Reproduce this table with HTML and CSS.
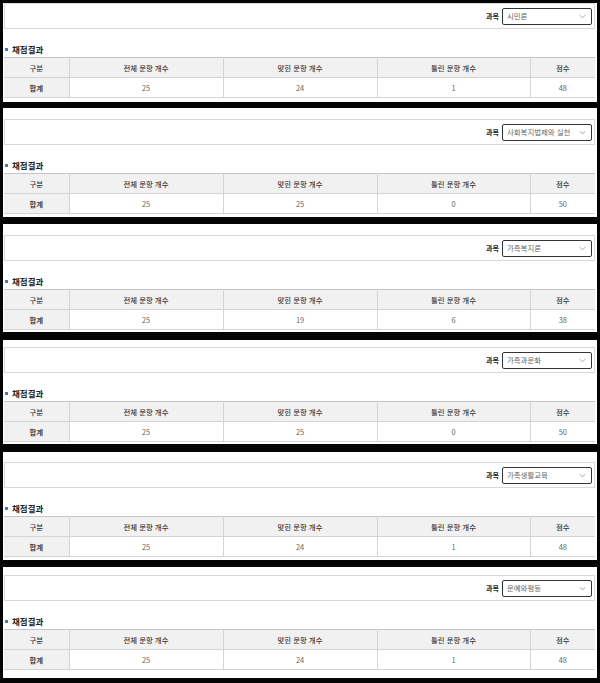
FILE: index.html
```html
<!DOCTYPE html>
<html lang="ko">
<head>
<meta charset="utf-8">
<title>채점결과</title>
<link rel="stylesheet" href="styles.css">
</head>
<body>
<div class="stack">

  <section class="panel p1">
    <div class="filter">
      <span class="label">과목</span>
      <div class="select"><span class="val">시민론</span><svg class="chev" viewBox="0 0 8 5" width="7" height="5"><path d="M1 1l3 3 3-3" fill="none" stroke="#888" stroke-width="0.9"/></svg></div>
    </div>
    <h3 class="title">채점결과</h3>
    <table class="result">
      <colgroup><col class="c1"><col class="c2"><col class="c3"><col class="c4"><col class="c5"></colgroup>
      <tr><th>구분</th><th>전체 문항 개수</th><th>맞힌 문항 개수</th><th>틀린 문항 개수</th><th>점수</th></tr>
      <tr><th class="rowh">합계</th><td>25</td><td>24</td><td>1</td><td>48</td></tr>
    </table>
  </section>

  <section class="panel p2">
    <div class="filter">
      <span class="label">과목</span>
      <div class="select"><span class="val">사회복지법제와 실천</span><svg class="chev" viewBox="0 0 8 5" width="7" height="5"><path d="M1 1l3 3 3-3" fill="none" stroke="#888" stroke-width="0.9"/></svg></div>
    </div>
    <h3 class="title">채점결과</h3>
    <table class="result">
      <colgroup><col class="c1"><col class="c2"><col class="c3"><col class="c4"><col class="c5"></colgroup>
      <tr><th>구분</th><th>전체 문항 개수</th><th>맞힌 문항 개수</th><th>틀린 문항 개수</th><th>점수</th></tr>
      <tr><th class="rowh">합계</th><td>25</td><td>25</td><td>0</td><td>50</td></tr>
    </table>
  </section>

  <section class="panel p3">
    <div class="filter">
      <span class="label">과목</span>
      <div class="select"><span class="val">가족복지론</span><svg class="chev" viewBox="0 0 8 5" width="7" height="5"><path d="M1 1l3 3 3-3" fill="none" stroke="#888" stroke-width="0.9"/></svg></div>
    </div>
    <h3 class="title">채점결과</h3>
    <table class="result">
      <colgroup><col class="c1"><col class="c2"><col class="c3"><col class="c4"><col class="c5"></colgroup>
      <tr><th>구분</th><th>전체 문항 개수</th><th>맞힌 문항 개수</th><th>틀린 문항 개수</th><th>점수</th></tr>
      <tr><th class="rowh">합계</th><td>25</td><td>19</td><td>6</td><td>38</td></tr>
    </table>
  </section>

  <section class="panel p4">
    <div class="filter">
      <span class="label">과목</span>
      <div class="select"><span class="val">가족과문화</span><svg class="chev" viewBox="0 0 8 5" width="7" height="5"><path d="M1 1l3 3 3-3" fill="none" stroke="#888" stroke-width="0.9"/></svg></div>
    </div>
    <h3 class="title">채점결과</h3>
    <table class="result">
      <colgroup><col class="c1"><col class="c2"><col class="c3"><col class="c4"><col class="c5"></colgroup>
      <tr><th>구분</th><th>전체 문항 개수</th><th>맞힌 문항 개수</th><th>틀린 문항 개수</th><th>점수</th></tr>
      <tr><th class="rowh">합계</th><td>25</td><td>25</td><td>0</td><td>50</td></tr>
    </table>
  </section>

  <section class="panel p5">
    <div class="filter">
      <span class="label">과목</span>
      <div class="select"><span class="val">가족생활교육</span><svg class="chev" viewBox="0 0 8 5" width="7" height="5"><path d="M1 1l3 3 3-3" fill="none" stroke="#888" stroke-width="0.9"/></svg></div>
    </div>
    <h3 class="title">채점결과</h3>
    <table class="result">
      <colgroup><col class="c1"><col class="c2"><col class="c3"><col class="c4"><col class="c5"></colgroup>
      <tr><th>구분</th><th>전체 문항 개수</th><th>맞힌 문항 개수</th><th>틀린 문항 개수</th><th>점수</th></tr>
      <tr><th class="rowh">합계</th><td>25</td><td>24</td><td>1</td><td>48</td></tr>
    </table>
  </section>

  <section class="panel p6">
    <div class="filter">
      <span class="label">과목</span>
      <div class="select"><span class="val">문예와평등</span><svg class="chev" viewBox="0 0 8 5" width="7" height="5"><path d="M1 1l3 3 3-3" fill="none" stroke="#888" stroke-width="0.9"/></svg></div>
    </div>
    <h3 class="title">채점결과</h3>
    <table class="result">
      <colgroup><col class="c1"><col class="c2"><col class="c3"><col class="c4"><col class="c5"></colgroup>
      <tr><th>구분</th><th>전체 문항 개수</th><th>맞힌 문항 개수</th><th>틀린 문항 개수</th><th>점수</th></tr>
      <tr><th class="rowh">합계</th><td>25</td><td>24</td><td>1</td><td>48</td></tr>
    </table>
  </section>

</div>
</body>
</html>
```

FILE: styles.css
```css
html, body {
  margin: 0;
  padding: 0;
  background: #050505;
}
body {
  width: 600px;
  height: 683px;
  overflow: hidden;
  font-family: "Noto Sans CJK KR", "Noto Sans", sans-serif;
  color: #555;
}
.stack {
  display: flex;
  flex-direction: column;
  padding-top: 3px;
}
.panel {
  background: #fff;
  margin: 0 3px;
  padding-left: 1px;
  padding-right: 2px;
}
.p1 { padding-top: 0;    padding-bottom: 4px; }
.p2 { margin-top: 6px;  padding-top: 11px; padding-bottom: 3px; }
.p3 { margin-top: 7px;  padding-top: 11px; padding-bottom: 2px; }
.p4 { margin-top: 8px;  padding-top: 7px;  padding-bottom: 2px; }
.p5 { margin-top: 8px;  padding-top: 10px; padding-bottom: 3px; }
.p6 { margin-top: 7px;  padding-top: 8px;  padding-bottom: 8px; }

.filter {
  height: 24px;
  border: 1px solid #d8d8d8;
  display: flex;
  align-items: center;
  justify-content: flex-end;
  padding-right: 2px;
}
.label {
  font-size: 7px;
  font-weight: 700;
  color: #222;
  margin-right: 3px;
  line-height: 10px;
}
.select {
  height: 15px;
  border: 1px solid #333;
  border-radius: 2px;
  display: flex;
  align-items: center;
  justify-content: space-between;
  padding: 0 5px 0 4px;
  box-sizing: content-box;
  width: 79px;
}
.val {
  font-size: 7.4px;
  color: #666;
  line-height: 10px;
  white-space: nowrap;
}
.chev {
  display: block;
  flex: none;
}
.title {
  margin: 14px 0 2px;
  padding-left: 1px;
  font-size: 8.5px;
  line-height: 12px;
  font-weight: 700;
  color: #222;
  display: flex;
  align-items: center;
}
.title::before {
  content: "";
  width: 3px;
  height: 3px;
  background: #3c7fc0;
  margin-right: 4px;
}
.result {
  width: 591px;
  border-collapse: collapse;
  table-layout: fixed;
}
.c1 { width: 65px; }
.c2 { width: 154px; }
.c3 { width: 154px; }
.c4 { width: 153px; }
.c5 { width: 65px; }
.result th,
.result td {
  height: 19px;
  padding: 0;
  border: 1px solid #d4d4d4;
  text-align: center;
  font-size: 7.4px;
  line-height: 10px;
}
.result tr:first-child th {
  border-top-color: #c4c4c4;
  background: #f1f1f1;
  font-weight: 500;
  color: #3a3a3a;
}
.result th.rowh {
  background: #f1f1f1;
  font-weight: 700;
  color: #444;
}
.result td {
  color: #666;
  background: #fff;
}
.result tr > :first-child { border-left: 0; }
.result tr > :last-child { border-right: 0; }
```
